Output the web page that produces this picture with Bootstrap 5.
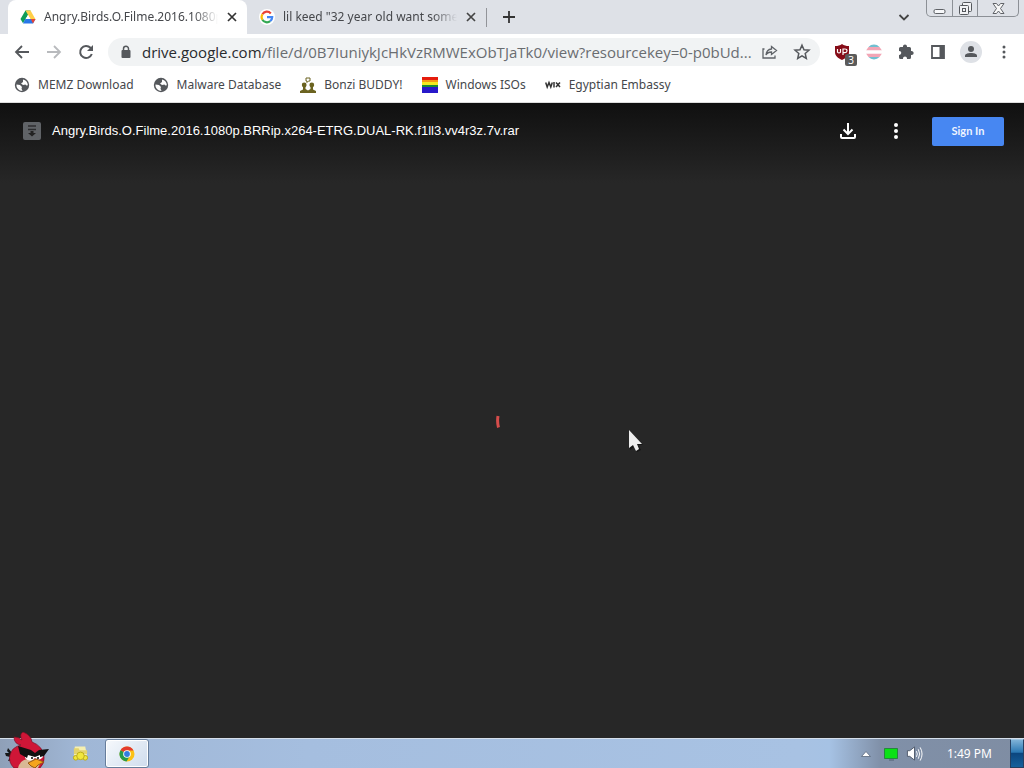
<!DOCTYPE html>
<html lang="en">
<head>
<meta charset="utf-8">
<meta name="viewport" content="width=device-width, initial-scale=1">
<title>Angry.Birds.O.Filme.2016.1080p - Google Drive</title>
<link rel="stylesheet" href="https://cdn.jsdelivr.net/npm/bootstrap@5.3.0/dist/css/bootstrap.min.css">
<style>
body{font-family:"Noto Sans","Open Sans",sans-serif;font-size:12px;line-height:16px;color:#45474b;background:#272727}
svg{display:block;flex:none}
button{background:none;border:0;padding:0;color:inherit;display:flex;align-items:center;justify-content:center;flex:none}
.strip{height:34px;background:#dee1e7;padding:0 5px 0 8px}
.browser-tab{width:239px;height:34px;padding:0 9px 0 12px}
.browser-tab.current{background:#fff;border-radius:8px 8px 0 0}
.tab-title{-webkit-mask-image:linear-gradient(90deg,#000 86%,transparent);mask-image:linear-gradient(90deg,#000 86%,transparent)}
.tab-end{width:1px;height:19px;background:#929499}
.win-controls{height:17px;border:1px solid #8c9096;border-top:0;border-radius:0 0 5px 5px}
.win-controls button{height:16px;width:25px}
.win-controls button+button{border-left:1px solid #8c9096}
.win-controls button:last-child{width:41px}
.toolbar{height:36px;padding:0 10px 0 12px}
.tool{width:20px;height:28px}
.omnibox{height:28px;background:#f1f3f4;border-radius:14px;padding:0 8px 0 10px}
.address{font-family:"Open Sans",sans-serif;font-size:15px;line-height:20px;color:#6a6d71}
.address b{font-weight:400;color:#292b2e}
.count{right:-5px;bottom:0;background:#5b5b5b;color:#fff;font-size:10px;line-height:12px;width:12px;border-radius:2px}
.avatar{width:22px;height:22px;border-radius:50%;background:#dee1e6}
.bookmarks{height:33px;padding:0 14px 3px;gap:19px;border-bottom:1px solid #ddd}
.bookmarks a{color:#45474b;font-size:12px}
.viewer{background:linear-gradient(#101010,#272727 80px)}
.viewer-bar{height:56px;padding:0 20px 0 22px;color:#fff}
.file-name{font-family:"Liberation Sans",sans-serif;font-size:13px;line-height:20px;margin-left:10px}
.sign-in{width:72px;height:29px;background:#4787f2;color:#eef4ff;border-radius:2px;font:700 11px/16px Lato,sans-serif}
.spinner{width:32px;height:30px}
.pointer{left:61%;top:51%}
.taskbar{height:30px;border-top:1px solid #d5dfeb;background:linear-gradient(90deg,#8fa0b8,#a0b7d6 80px,#a5bedf 30%,#a8c2e3 78%,#a6c2e4 81%,#8090a8 86%,#7f8da3)}
.bird{left:5px;bottom:0}
.task-active{width:44px;height:29px;border:1px solid #667d9b;border-radius:3px;background:linear-gradient(135deg,#f6f9fc,#cfdced);box-shadow:inset 0 0 0 1px #fff}
.clock{color:#fff;font-size:12px;margin:0 18px 0 24px}
.show-desktop{width:14px;height:29px;border:1px solid #263f60;border-top-color:#9fc6e3;background:linear-gradient(#7fb2d7,#2b78b3 45%,#0c467f 50%,#17609b)}
</style>
</head>
<body class="d-flex flex-column vh-100 overflow-hidden">
<header class="bg-white">
  <div class="strip d-flex align-items-center">
    <div class="browser-tab current d-flex align-items-center gap-2">
      <svg width="16" height="16" viewBox="0 0 16 16"><path fill="#0f9d58" d="M5.5 1.5h5L8 6 3 14.2.5 10z"/><path fill="#ffcf48" d="M5.5 1.5h5l5 8.8h-5z"/><path fill="#2878e8" d="M5.4 10h10.1L13 14.5H3z"/><path fill="#e94335" d="M10.8 10h4.7L13 14.5z"/><path fill="#fff" d="m8 6 2.3 4H5.7z"/></svg>
      <span class="tab-title flex-grow-1 text-nowrap overflow-hidden">Angry.Birds.O.Filme.2016.1080p.BRRip</span>
      <button aria-label="Close tab"><svg width="12" height="12" viewBox="0 0 12 12"><path d="m2 2 8 8m0-8-8 8" stroke="#333" stroke-width="1.7"/></svg></button>
    </div>
    <div class="browser-tab d-flex align-items-center gap-2">
      <svg width="16" height="16" viewBox="0 0 16 16"><circle cx="8" cy="8" r="8" fill="#fff"/><g fill="none" stroke-width="2.2"><path stroke="#ea4335" d="M3.4 5.3A5.2 5.2 0 0 1 11.8 4.4"/><path stroke="#fbbc05" d="M3.4 5.3a5.2 5.2 0 0 0 0 5.4"/><path stroke="#34a853" d="M3.4 10.7a5.2 5.2 0 0 0 7.8 1.4"/><path stroke="#4285f4" d="M8 8.2h5.2a5 5 0 0 1-2 3.9"/></g></svg>
      <span class="tab-title flex-grow-1 text-nowrap overflow-hidden">lil keed "32 year old want some more</span>
      <button aria-label="Close tab"><svg width="12" height="12" viewBox="0 0 12 12"><path d="m2 2 8 8m0-8-8 8" stroke="#444" stroke-width="1.7"/></svg></button>
    </div>
    <span class="tab-end"></span>
    <button class="ms-3" aria-label="New tab"><svg width="12" height="12" viewBox="0 0 12 12"><path d="M6 0v12M0 6h12" stroke="#333" stroke-width="1.8"/></svg></button>
    <button class="ms-auto me-3" aria-label="Search tabs"><svg width="12" height="12" viewBox="0 0 12 12"><path d="m1.500 4 4.500 4.500L10.500 4" fill="none" stroke="#444" stroke-width="1.800"/></svg></button>
    <div class="win-controls d-flex align-self-start">
      <button aria-label="Minimize"><svg width="13" height="15" viewBox="0 0 13 15"><rect x="1" y="8.500" width="11" height="4" rx="1.500" fill="#f7f8fa" stroke="#5f6267"/></svg></button>
      <button aria-label="Restore"><svg width="15" height="15" viewBox="0 0 15 15" fill="#f1f2f4" stroke="#55585d"><rect x="4.500" y="1.500" width="9" height="9" rx="1"/><rect x="1.500" y="4.500" width="9" height="9" rx="1"/><rect x="4.500" y="7.500" width="3" height="3"/></svg></button>
      <button aria-label="Close"><svg width="13" height="13" viewBox="0 0 13 13"><path d="M1 1.500h3.500l2 2.500 2-2.500H12L8.500 6.500l3.500 5H8.500l-2-2.500-2 2.500H1l3.500-5z" fill="#f8f8f8" stroke="#606368"/></svg></button>
    </div>
  </div>
  <div class="toolbar d-flex align-items-center gap-2">
    <div class="d-flex gap-2">
      <button class="tool" aria-label="Back"><svg width="18" height="18" viewBox="0 0 18 18"><path d="M16 9H3m6-6L3 9l6 6" fill="none" stroke="#55585c" stroke-width="1.800"/></svg></button>
      <button class="tool ms-1" aria-label="Forward"><svg width="18" height="18" viewBox="0 0 18 18"><path d="M2 9h13M9 3l6 6-6 6" fill="none" stroke="#b8babd" stroke-width="1.800"/></svg></button>
      <button class="tool ms-1" aria-label="Reload"><svg width="18" height="18" viewBox="0 0 18 18"><path d="M14.800 11A6 6 0 1 1 13.500 4.800L15 6.300" fill="none" stroke="#55585c" stroke-width="2"/><path d="M16 2v6h-6z" fill="#55585c"/></svg></button>
    </div>
    <div class="omnibox d-flex align-items-center flex-fill overflow-hidden ms-1">
      <svg width="16" height="16" viewBox="0 0 16 16"><rect x="3.500" y="6" width="9" height="8" rx="1" fill="#55585c"/><path d="M5.500 7V4.700a2.500 2.500 0 0 1 5 0V7" fill="none" stroke="#55585c" stroke-width="1.500"/></svg>
      <span class="address text-nowrap ms-2"><b>drive.google.com</b>/file/d/0B7IuniykJcHkVzRMWExObTJaTk0/view?resourcekey=0-p0bUd...</span>
      <button class="tool ms-auto me-1" aria-label="Share"><svg width="18" height="18" viewBox="0 0 18 18" fill="none" stroke="#5f6368" stroke-width="1.300"><path d="M3.500 6H2v9h12v-2.500"/><path d="M10.500 3.500 15.500 7.500l-5 4V9C7.500 9 6 10 5 12c.3-3.500 2.200-5.700 5.500-6z"/></svg></button>
      <button class="tool ms-2" aria-label="Bookmark"><svg width="18" height="18" viewBox="0 0 18 18"><path d="m9 2.200 2 4.600 5 .4-3.800 3.300 1.100 4.900L9 12.800l-4.300 2.600 1.100-4.900L2 7.200l5-.4z" fill="none" stroke="#55585c" stroke-width="1.500"/></svg></button>
    </div>
    <div class="d-flex align-items-center gap-2">
      <button class="tool position-relative ms-1" aria-label="uBlock"><svg width="16" height="16" viewBox="0 0 16 16"><path fill="#860d18" d="M8 0c2 1.500 4 2 7 2v6c0 4-3 6-7 8-4-2-7-4-7-8V2c3 0 5-.5 7-2z"/><path d="M3.500 5v3.200q1.500 1.600 3 0V5M9 11V5h2q2 0 2 1.800T11 8.700H9" fill="none" stroke="#fff" stroke-width="1.200"/></svg><span class="count position-absolute text-center">3</span></button>
      <button class="tool ms-1" aria-label="Flag extension"><svg width="16" height="16" viewBox="0 0 16 16"><path fill="#71bfd0" d="M2.500 3a7.500 7.500 0 0 1 11 0zM2.500 13a7.500 7.500 0 0 0 11 0z"/><path fill="#f2a5b5" d="M2.500 3h11L16 6.500H0zM0 9.500h16L13.500 13h-11z"/><path fill="#fff" d="M0 6.500h16v3H0z"/></svg></button>
      <button class="tool ms-1" aria-label="Extensions"><svg width="16" height="16" viewBox="0 0 16 16"><path fill="#55585c" d="M1 4.500Q1 3 2.500 3H5c-.5-3.500 4.500-3.500 4 0h2.500Q13 3 13 4.500V7c3.500-.5 3.500 4.500 0 4v2.500q0 1.500-1.500 1.500H9c.3-3.300-4.300-3.300-4 0H2.500Q1 15 1 13.500V11c3-.3 3-4.200 0-4z"/></svg></button>
      <button class="tool ms-1" aria-label="Side panel"><svg width="16" height="16" viewBox="0 0 16 16"><path d="M2 2h12v12H2z" fill="#fff" stroke="#55585c" stroke-width="1.800"/><path d="M9.500 2H14v12H9.500z" fill="#55585c"/></svg></button>
      <button class="avatar ms-1" aria-label="Profile"><svg width="14" height="14" viewBox="0 0 14 14" fill="#55585c"><circle cx="7" cy="4" r="3"/><path d="M1 12v-1.500C1 7 13 7 13 10.500V12z"/></svg></button>
      <button class="tool ms-1" aria-label="Menu"><svg width="16" height="16" viewBox="0 0 16 16" fill="#55585c"><circle cx="8" cy="3" r="1.500"/><circle cx="8" cy="8" r="1.500"/><circle cx="8" cy="13" r="1.500"/></svg></button>
    </div>
  </div>
  <nav class="bookmarks d-flex align-items-center">
    <a href="#" class="d-flex gap-2 text-decoration-none"><svg width="16" height="16" viewBox="0 0 16 16"><circle cx="8" cy="8" r="7.200" fill="#55585c"/><path fill="#fff" d="M2.500 7.500 6 8l2 2-.5 1.500 1 2.500C5 14 2 11 2.500 7.500zM9 2.500c3 .5 4.800 3 4.800 5.500-1 1-1.800.3-2.300-.5L9 8 7 6.500 9 5z"/></svg>MEMZ Download</a>
    <a href="#" class="d-flex gap-2 text-decoration-none"><svg width="16" height="16" viewBox="0 0 16 16"><circle cx="8" cy="8" r="7.200" fill="#55585c"/><path fill="#fff" d="M2.500 7.500 6 8l2 2-.5 1.500 1 2.500C5 14 2 11 2.500 7.500zM9 2.500c3 .5 4.800 3 4.800 5.500-1 1-1.800.3-2.300-.5L9 8 7 6.500 9 5z"/></svg>Malware Database</a>
    <a href="#" class="d-flex gap-2 text-decoration-none"><svg width="16" height="16" viewBox="0 0 16 16"><g fill="#6b6320"><circle cx="4.200" cy="8" r="2.400"/><circle cx="11.800" cy="8" r="2.400"/><path d="M0 16v-2l3-1.500V9h2.500v3L8 13.500l2.500-1.500V9H13v3.500l3 1.500v2z"/></g><path d="M6 1h4v3H8.500L7 5.500V4H6z" fill="#fff" stroke="#6b6320"/></svg>Bonzi BUDDY!</a>
    <a href="#" class="d-flex gap-2 text-decoration-none"><svg width="16" height="16" viewBox="0 0 16 16"><path fill="#e51c0c" d="M0 0h16v3H0z"/><path fill="#f59a13" d="M0 3h16v2H0z"/><path fill="#f2ea22" d="M0 5h16v3H0z"/><path fill="#168a37" d="M0 8h16v2H0z"/><path fill="#2718ca" d="M0 10h16v6H0z"/></svg>Windows ISOs</a>
    <a href="#" class="d-flex gap-2 text-decoration-none"><svg width="16" height="16" viewBox="0 0 16 16"><path d="m.7 5.500 1.500 4.500L4 5.500 5.800 10l1.500-4.500M9 5v5.500M11 5.500l4 4.500m0-4.500L11 10" fill="none" stroke="#333" stroke-width="1.500"/></svg>Egyptian Embassy</a>
  </nav>
</header>
<main class="viewer flex-fill position-relative d-flex flex-column">
  <div class="viewer-bar d-flex align-items-center">
    <svg width="20" height="20" viewBox="0 0 20 20"><rect x="1" y="1" width="18" height="18" rx="2" fill="#606367"/><path d="M6 5h8M6 8.500h8" stroke="#2c2d2f" stroke-width="1.500"/><path d="M8.500 10v2H6l4 3.500 4-3.500h-2.500v-2z" fill="#222"/></svg>
    <span class="file-name text-nowrap">Angry.Birds.O.Filme.2016.1080p.BRRip.x264-ETRG.DUAL-RK.f1ll3.vv4r3z.7v.rar</span>
    <div class="d-flex align-items-center gap-4 ms-auto">
      <button aria-label="Download"><svg width="24" height="24" viewBox="0 0 24 24" fill="none" stroke="#fff" stroke-width="2"><path d="M12 4v11M7.500 10.500 12 15l4.500-4.500M5 15v3q0 1 1 1h12q1 0 1-1v-3"/></svg></button>
      <button aria-label="More actions"><svg width="24" height="24" viewBox="0 0 24 24" fill="#fff"><circle cx="12" cy="6" r="2"/><circle cx="12" cy="12" r="2"/><circle cx="12" cy="18" r="2"/></svg></button>
      <button class="sign-in">Sign In</button>
    </div>
  </div>
  <div class="position-absolute top-50 start-50 translate-middle spinner" role="status" aria-label="Loading"><svg width="30" height="30" viewBox="0 0 30 30"><path d="M2 10q-1 6 .5 11.500" fill="none" stroke="#d54d4b" stroke-width="3"/></svg></div>
  <svg class="pointer position-absolute" width="20" height="28" viewBox="0 -2 20 28"><path d="M5 3v18l4-3 3 5 4-2-3-5h5z" fill="#151515"/><path d="M4 1v18l4-3 3 6 3-2-2-5h5z" fill="#eee"/></svg>
</main>
<footer class="taskbar position-relative d-flex align-items-center">
  <button class="bird position-absolute" aria-label="Start"><svg width="44" height="36" viewBox="0 0 44 36"><path d="m8 22-5-6-1 3 2 2-4 0 1 3 4 1-2 4 6-1z" fill="#161718"/><path d="M16 13Q9 12 9 5q5 0 8 3-3-6 1-8 8 3 9 10 11 4 12 15 1 6-4 11H9q-6-6-4-13 2-8 11-10z" fill="#cf1637" stroke="#7c1024" stroke-width=".7"/><path d="M13 36q2-8 10-9 8-1 12 5l-2 4z" fill="#d9b895"/><path d="M20 21h7l3 2 8-3v5q-4 5-8 1-5 5-10 0z" fill="#fff"/><path d="m13 14 13 4 4 3 4-3 10-1-5 7-4 1v-2l-5 2-7-2-1 3-7-4z" fill="#111"/><circle cx="27" cy="26" r="1"/><circle cx="33" cy="26" r="1"/><path d="m23 31 8-4 8 3-6 3-3 3-4-2z" fill="#f4a51c" stroke="#965716"/></svg></button>
  <div class="d-flex align-items-center gap-3 ms-5 ps-4">
    <button aria-label="Files"><svg width="17" height="18" viewBox="0 0 18 18"><path d="M3 1h11l2 10H2z" fill="#f5efb0"/><path d="M2 3h5l1 2h8v4H2z" fill="#e3d36c"/><g fill="#f1e73d" stroke="#bbab19"><circle cx="4" cy="13" r="2.500"/><circle cx="14" cy="13" r="2.500"/><circle cx="9" cy="11" r="4"/></g></svg></button>
    <button class="task-active" aria-label="Chrome"><svg width="16" height="16" viewBox="0 0 16 16"><circle cx="8" cy="8" r="7.500" fill="#fbc116"/><path d="M8 8 1.500 4.200A7.500 7.500 0 0 1 14.500 4.500H8z" fill="#e33b2e"/><path d="M1.500 4.200A7.500 7.500 0 0 0 7.500 15.500L11 9.800 8 8z" fill="#259b4b"/><circle cx="8" cy="8" r="3.800" fill="#fff"/><circle cx="8" cy="8" r="2.900" fill="#337de1"/></svg></button>
  </div>
  <div class="d-flex align-items-center ms-auto">
    <button class="me-2" aria-label="Hidden icons"><svg width="12" height="12" viewBox="0 0 12 12"><path d="m1.500 8.500 4.500-5 4.500 5z" fill="#fff" stroke="#59677c" stroke-width=".8"/></svg></button>
    <button class="mx-1" aria-label="Display"><svg width="14" height="14" viewBox="0 0 14 14"><path d="M.5 1.500h13v10h-13z" fill="#0be116" stroke="#25883d"/><path d="M5 13h5" stroke="#516172"/></svg></button>
    <button class="ms-1" aria-label="Volume"><svg width="17" height="18" viewBox="0 0 18 18"><path d="M1.500 5.500H4l5-4v14l-5-4H1.500z" fill="#fff" stroke="#4f596a"/><path d="M11 6q2 3 0 6m2-8q3 5 0 10m2-12q4 7 0 14" fill="none" stroke="#fff"/></svg></button>
    <time class="clock">1:49 PM</time>
    <button class="show-desktop" aria-label="Show desktop"></button>
  </div>
</footer>
<script src="https://cdn.jsdelivr.net/npm/bootstrap@5.3.0/dist/js/bootstrap.bundle.min.js"></script>
</body>
</html>
